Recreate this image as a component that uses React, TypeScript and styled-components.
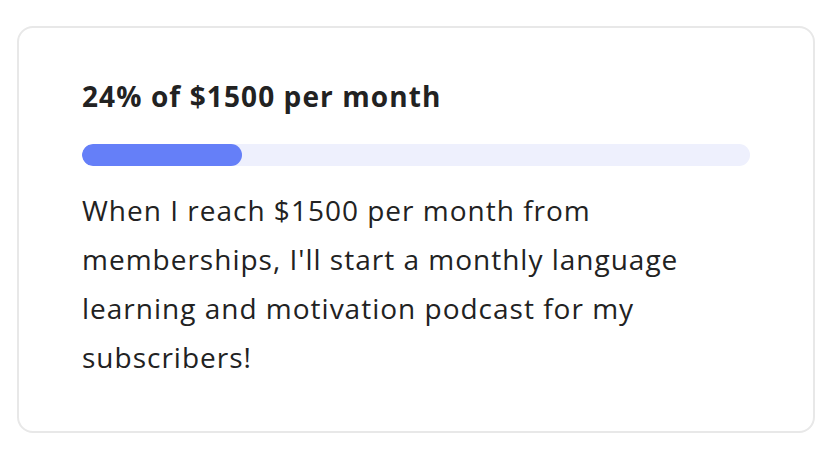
import React from 'react';
import styled, {createGlobalStyle} from 'styled-components';

const GlobalStyle = createGlobalStyle`
  html, body {
    margin: 0;
    padding: 0;
    background: #ffffff;
  }
  body {
    font-family: "Open Sans", Lato, sans-serif;
    color: #222222;
  }
`;

const Page = styled.div`
  width: 840px;
  height: 450px;
  padding: 26px 25px 17px 17px;
  box-sizing: border-box;
`;

const Card = styled.div`
  height: 100%;
  box-sizing: border-box;
  border: 2px solid #e8e8e8;
  border-radius: 16px;
  padding: 52px 63px 0 63px;
  display: flex;
  flex-direction: column;
`;

const Title = styled.h3`
  margin: 0;
  font-size: 28px;
  font-weight: 700;
  line-height: 32px;
  color: #222222;
  letter-spacing: 1.1px;
`;

const Track = styled.div`
  margin-top: 32px;
  height: 22px;
  border-radius: 11px;
  background: #eef0fd;
  overflow: hidden;
`;

const Fill = styled.div<{$percent: number}>`
  width: ${p => p.$percent}%;
  height: 100%;
  border-radius: 11px;
  background: #657ff8;
`;

const Description = styled.p`
  margin: 20px 0 0;
  font-size: 28px;
  line-height: 49px;
  letter-spacing: 1px;
  color: #222222;
`;

type GoalProps = {
    percent: number
    amount: number
}

const Goal = ({percent, amount}: GoalProps) => (
    <Card>
        <Title>{percent}% of ${amount} per month</Title>
        <Track>
            <Fill $percent={percent}/>
        </Track>
        <Description>
            When I reach ${amount} per month from memberships, I'll start a monthly language
            learning and motivation podcast for my subscribers!
        </Description>
    </Card>
);

export default function App() {
    return (
        <>
            <GlobalStyle/>
            <Page>
                <Goal percent={24} amount={1500}/>
            </Page>
        </>
    );
}
